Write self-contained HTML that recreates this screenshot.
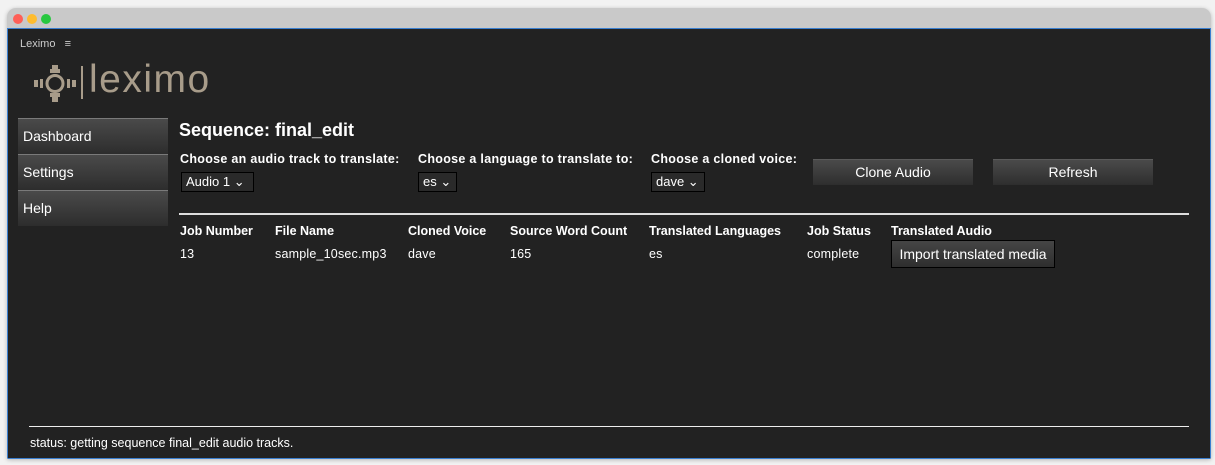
<!DOCTYPE html>
<html><head><style>
*{margin:0;padding:0;box-sizing:border-box}
body{width:1215px;height:465px;background:#f2f2f2;position:relative;overflow:hidden;font-family:"Liberation Sans",sans-serif}
.win{position:absolute;left:7px;top:8px;width:1204px;height:451px;border-radius:9px 9px 2px 2px;background:#c9c9c9;box-shadow:0 1px 4px rgba(0,0,0,.25);overflow:hidden}
.dot{position:absolute;top:6px;width:10px;height:10px;border-radius:50%}
.body{position:absolute;left:0;top:20px;width:1204px;height:431px;background:#222;border:1px solid #3a7fd0}
.a{position:absolute;color:#fff;white-space:nowrap}
.b{font-weight:bold}
.nav{position:absolute;left:10px;width:150px;height:36px;background:linear-gradient(#4a4a4a,#2d2d2d);border-top:1px solid #7a7a7a;color:#fff;font-size:14px;padding:9px 0 0 5px}
.sel{position:absolute;top:143px;height:20px;border:1px solid #000;background:#2a2a2a;color:#fff;font-size:13px;padding:1px 4px}
.btn{position:absolute;top:130px;width:160px;height:26px;background:linear-gradient(#4a4a4a,#2e2e2e);border-top:1px solid #5a5a5a;color:#fff;font-size:14px;text-align:center;line-height:25px}
.h{font-size:12.5px;font-weight:bold;top:195px}
.r{font-size:12.5px;top:218px;letter-spacing:.2px}
.l{font-size:12.5px;font-weight:bold;top:123px;letter-spacing:.3px}
</style></head><body>
<div class="win">
<div class="dot" style="left:6px;background:#fe5f57"></div>
<div class="dot" style="left:20px;background:#febc2e"></div>
<div class="dot" style="left:34px;background:#28c840"></div>
<div class="body">
<div class="a" style="left:12px;top:9px;font-size:11px;color:#ccc">Leximo&nbsp;&nbsp;&nbsp;≡</div>
<svg style="position:absolute;left:24px;top:34px" width="48" height="42" viewBox="0 0 48 42" fill="#a89c8a">
<path d="M20 2h6v4h2v4H18V6h2z"/><path d="M18 30h10v4h-2v5h-6v-5h-2z"/>
<path d="M2 17h4v7H2z"/><path d="M8 16h3v9H8z"/><path d="M40 17h4v7h-4z"/><path d="M35 16h3v9h-3z"/>
<circle cx="23" cy="20.5" r="8" fill="none" stroke="#a89c8a" stroke-width="3"/>
</svg>
<div style="position:absolute;left:73px;top:37px;width:2px;height:33px;background:#a89c8a"></div>
<div class="a" style="left:81px;top:29px;font-size:39px;color:#a89c8a;letter-spacing:1.5px;font-family:'Liberation Sans',sans-serif">leximo</div>
<div class="nav" style="top:89px">Dashboard</div>
<div class="nav" style="top:125px">Settings</div>
<div class="nav" style="top:161px">Help</div>
<div class="a b" style="left:171px;top:91px;font-size:18px">Sequence: final_edit</div>
<div class="a l" style="left:172px">Choose an audio track to translate:</div>
<div class="a l" style="left:410px">Choose a language to translate to:</div>
<div class="a l" style="left:643px">Choose a cloned voice:</div>
<div class="sel" style="left:173px;width:73px">Audio 1 ⌄</div>
<div class="sel" style="left:410px;width:39px">es ⌄</div>
<div class="sel" style="left:643px;width:54px">dave ⌄</div>
<div class="btn" style="left:805px">Clone Audio</div>
<div class="btn" style="left:985px">Refresh</div>
<div style="position:absolute;left:171px;top:184px;width:1010px;height:2px;background:#ddd"></div>
<div class="a h" style="left:172px">Job Number</div>
<div class="a h" style="left:267px">File Name</div>
<div class="a h" style="left:400px">Cloned Voice</div>
<div class="a h" style="left:502px">Source Word Count</div>
<div class="a h" style="left:641px">Translated Languages</div>
<div class="a h" style="left:799px">Job Status</div>
<div class="a h" style="left:883px">Translated Audio</div>
<div class="a r" style="left:172px">13</div>
<div class="a r" style="left:267px">sample_10sec.mp3</div>
<div class="a r" style="left:400px">dave</div>
<div class="a r" style="left:502px">165</div>
<div class="a r" style="left:641px">es</div>
<div class="a r" style="left:799px">complete</div>
<div style="position:absolute;left:883px;top:211px;width:164px;height:28px;border:1px solid #000;background:linear-gradient(#454545,#2e2e2e);color:#fff;font-size:14px;line-height:26px;text-align:center">Import translated media</div>
<div style="position:absolute;left:21px;top:397px;width:1160px;height:1px;background:#eee"></div>
<div class="a" style="left:22px;top:407px;font-size:12.5px">status: getting sequence final_edit audio tracks.</div>
</div></div>
</body></html>
